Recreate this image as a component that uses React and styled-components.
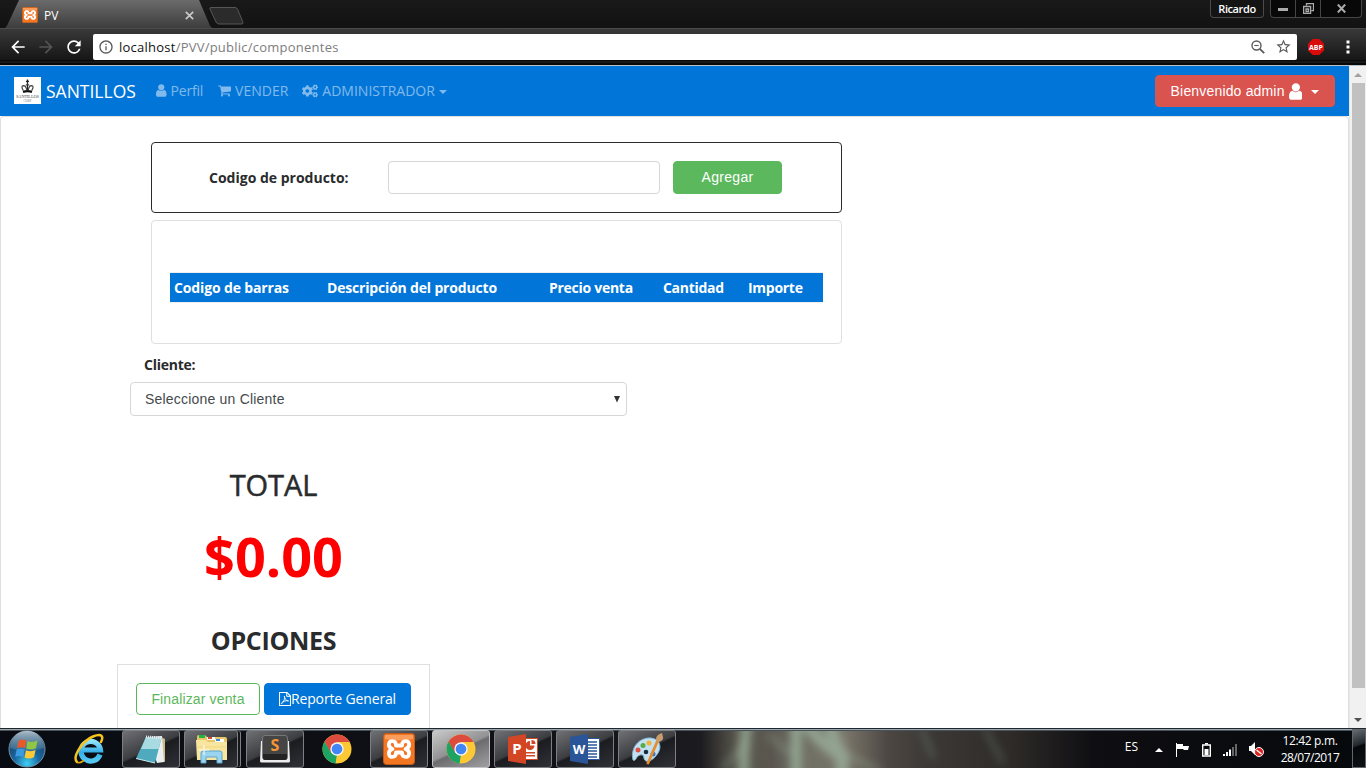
import React from "react";
import styled, { createGlobalStyle, css } from "styled-components";
import { FaCogs } from "react-icons/fa";
import { MdArrowBack, MdArrowForward, MdRefresh, MdInfoOutline, MdStarBorder } from "react-icons/md";

const UI = '"Open Sans", "Noto Sans", sans-serif';
const ARIAL = '"Liberation Sans", Arial, sans-serif';
const BLUE = "#0275d8";

const Global = createGlobalStyle`
  * { box-sizing: border-box; }
  body { margin: 0; background: #fff; overflow: hidden; font-family: ${UI}; color: #292b2c; }
  svg { display: block; flex: none; }
`;

const Label = styled.span`
  display: inline-block;
  white-space: nowrap;
  letter-spacing: ${(p) => p.$ls || 0}px;
`;

const Screen = styled.div`
  width: 1366px;
  height: 768px;
  display: flex;
  flex-direction: column;
  overflow: hidden;
`;

/* ---------- browser window ---------- */
const TitleBar = styled.header`
  height: 28px;
  flex: none;
  display: flex;
  align-items: flex-start;
  justify-content: space-between;
  background: linear-gradient(#191919, #121212);
`;
const TabStrip = styled.div`
  display: flex;
  height: 28px;
  padding-left: 5px;
`;
const Tab = styled.div`
  width: 207px;
  height: 28px;
  display: flex;
  align-items: center;
  padding: 2px 18px 0 17px;
  margin-right: -3px;
  color: #fff;
  font-size: 12px;
  background: linear-gradient(#6b6b6b, #3d3d3d);
  clip-path: polygon(0 100%, 2px 92%, 14px 0, 194px 0, 205px 92%, 100% 100%);
`;
const TabTitle = styled(Label)`
  flex: 1;
  margin-left: 6px;
`;
const WindowControls = styled.div`
  display: flex;
  align-items: flex-start;
  padding-right: 4px;
`;
const UserBadge = styled.div`
  width: 54px;
  height: 18px;
  margin-right: 6px;
  border: 1px solid #4a4a4a;
  border-top: 0;
  border-radius: 0 0 4px 4px;
  background: #141414;
  color: #fff;
  font: 600 11px/17px ${UI};
  text-align: center;
`;
const ControlGroup = styled.div`
  display: flex;
  height: 18px;
  border: 1px solid #454545;
  border-top: 0;
  border-radius: 0 0 4px 4px;
  background: #080808;
`;
const Control = styled.div`
  width: ${(p) => p.$w}px;
  display: flex;
  align-items: center;
  justify-content: center;
  & + & { border-left: 1px solid #454545; }
`;
const Toolbar = styled.div`
  height: 38px;
  flex: none;
  display: flex;
  align-items: center;
  padding: 0 12px 0 8px;
  border-top: 1px solid #4b4b4b;
  border-bottom: 1px solid #b9c2c8;
  background: linear-gradient(#393939 0, #161616 31px, #000 32px, #2a2a2a 33px, #080808 34px);
`;
const NavIcon = styled.div`
  width: 28px;
  margin-bottom: 1px;
  color: ${(p) => (p.$off ? "#545454" : "#fff")};
`;
const AddressBar = styled.div`
  width: 1204px;
  height: 26px;
  margin: 0 0 1px 1px;
  display: flex;
  align-items: center;
  padding: 0 5px;
  background: #fff;
  border-radius: 2px;
  color: #7d7d7d;
  font-size: 13px;
`;
const Url = styled(Label)`
  flex: 1;
  margin-left: 5px;
  b { font-weight: 400; color: #111; }
`;
const StarIcon = styled(MdStarBorder)`
  margin-left: 10px;
`;
const Extension = styled.div`
  margin: 0 22px 0 11px;
`;

const Viewport = styled.div`
  height: 662px;
  flex: none;
  display: flex;
`;
const Page = styled.div`
  width: 1349px;
  height: 662px;
  display: flex;
  flex-direction: column;
  overflow: hidden;
  background: #fff;
`;
const ScrollBar = styled.div`
  width: 17px;
  display: flex;
  flex-direction: column;
  align-items: center;
  background: #f1f1f1;
  padding: 7px 0 6px;
  border-left: 1px solid #e6e6e6;
`;
const Thumb = styled.div`
  width: 13px;
  height: 605px;
  background: #c1c1c1;
  margin: 6px 0 auto;
`;
const Arrow = styled.div`
  border: 4px solid transparent;
  border-top-width: ${(p) => (p.$up ? 0 : 4)}px;
  border-bottom-width: ${(p) => (p.$up ? 4 : 0)}px;
  border-top-color: #505050;
  border-bottom-color: #a3a3a3;
`;

/* ---------- application ---------- */
const NavBar = styled.nav`
  height: 50px;
  flex: none;
  display: flex;
  align-items: center;
  padding: 0 14px;
  background: ${BLUE};
`;
const Brand = styled.div`
  display: flex;
  align-items: center;
  width: 142px;
  height: 50px;
  padding-bottom: 1px;
  color: #fff;
  font-size: 17.5px;
  gap: 5px;
`;
const NavLink = styled.a`
  display: flex;
  align-items: center;
  gap: 4px;
  padding-bottom: 1px;
  margin-right: ${(p) => p.$mr || 0}px;
  color: rgba(255, 255, 255, 0.5);
  font-size: 14px;
`;
const Caret = styled.i`
  border: 4px solid transparent;
  border-top-color: currentColor;
  border-bottom: 0;
  margin-top: 2px;
`;
const Button = styled.button`
  display: flex;
  align-items: center;
  justify-content: center;
  height: ${(p) => p.$h || 32}px;
  width: ${(p) => p.$w}px;
  padding: 0 0 ${(p) => (p.$h ? 2 : 0)}px;
  border: 1px solid ${(p) => p.$color};
  border-radius: 4px;
  background: ${(p) => (p.$outline ? "#fff" : p.$color)};
  color: ${(p) => (p.$outline ? p.$color : "#fff")};
  font: 14px/20px ${(p) => (p.$ui ? UI : ARIAL)};
`;
const UserButton = styled(Button)`
  margin-left: auto;
  gap: 4px;
  svg + i { margin-left: 5px; margin-top: 1px; }
`;
const Body = styled.main`
  width: 1349px;
  flex: 1;
  border: 1px solid #dfdfdf;
  border-bottom: 0;
  border-radius: 4px 4px 0 0;
  padding: 25px 0 0 116px;
`;
const Card = styled.section`
  width: 691px;
  height: ${(p) => p.$h}px;
  margin: 0 0 7px 34px;
  border: 1px solid ${(p) => (p.$dark ? "#292b2c" : "#dfdfdf")};
  border-radius: 4px;
`;
const SearchCard = styled(Card)`
  display: flex;
  align-items: center;
  padding-left: 57px;
`;
const FieldLabel = styled.label`
  display: block;
  width: 179px;
  font-weight: 700;
  font-size: 14px;
  line-height: 20px;
`;
const Input = styled.input`
  width: 272px;
  height: 33px;
  margin: 0 13px 0 0;
  border: 1px solid #d6d6d6;
  border-radius: 4px;
  outline: 0;
`;
const TableCard = styled(Card)`
  padding: 51px 18px 0;
`;
const HeadRow = styled.div`
  display: grid;
  grid-template-columns: 153px 222px 114px 85px 79px;
  height: 31px;
  border-top: 1px solid #eceeef;
  border-bottom: 1px solid #eceeef;
  background: ${BLUE};
  background-clip: padding-box;
  color: #fff;
  font-weight: 700;
  font-size: 14px;
  line-height: 30px;
`;
const HeadCell = styled.div`
  padding-left: 4px;
`;
const ClientBlock = styled.section`
  padding: 4px 0 0 13px;
  ${FieldLabel} { margin: 0 0 7px 14px; line-height: 20px; }
`;
const Select = styled.div`
  width: 497px;
  height: 34px;
  display: flex;
  align-items: center;
  justify-content: space-between;
  padding: 0 6px 0 14px;
  border: 1px solid #d6d6d6;
  border-radius: 4px;
  color: #464a4c;
  font: 14px/20px ${ARIAL};
`;
const Summary = styled.section`
  width: 313px;
  display: flex;
  flex-direction: column;
  align-items: center;
  text-align: center;
`;
const TotalTitle = styled.h2`
  margin: 49px 0 0;
  font-size: 29px;
  line-height: 40px;
  font-weight: 500;
  -webkit-text-stroke: 0.5px #292b2c;
`;
const Amount = styled.div`
  margin-top: 16px;
  color: #f00;
  font-weight: 700;
  font-size: 54px;
  line-height: 70px;
`;
const OptionsTitle = styled.h3`
  margin: 34px 0 0;
  font-size: 25px;
  line-height: 30px;
  font-weight: 700;
`;
const Options = styled.div`
  align-self: stretch;
  margin-top: 9px;
  height: 90px;
  display: flex;
  align-items: flex-start;
  gap: 4px;
  padding: 18px;
  border: 1px solid #dfdfdf;
`;

/* ---------- task bar ---------- */
const TaskBar = styled.footer`
  position: relative;
  height: 40px;
  flex: none;
  display: flex;
  justify-content: space-between;
  border-top: 1px solid #20262e;
  background: #0a0b10;
`;
const Wallpaper = styled.svg`
  position: absolute;
  inset: 0;
`;
const TaskGroup = styled.div`
  position: relative;
  display: flex;
  align-items: center;
  padding-left: ${(p) => p.$pl || 0}px;
`;
const Task = styled.div`
  width: 58px;
  height: 38px;
  margin-right: 4px;
  display: flex;
  align-items: center;
  justify-content: center;
  ${(p) =>
    !p.$plain &&
    css`
      border: 1px solid ${p.$active ? "#c4c4c6" : "#7c7f84"};
      border-radius: 3px;
      background: ${p.$active
        ? "linear-gradient(155deg, #c9c9ca 0, #929294 48%, #6c6c70 52%, #a0a0a2 100%)"
        : "linear-gradient(155deg, #707175 0, #3c3d41 48%, #1b1c20 52%, #303136 100%)"};
    `}
`;
const FirstTask = styled(Task)`
  margin-left: 14px;
`;
const StackedTask = styled(Task)`
  width: 54px;
  margin-right: 8px;
  box-shadow: 3px 0 0 -1px #15161a, 4px 0 0 -1px #7c7f84;
`;
const Tray = styled(TaskGroup)`
  color: #fff;
  font-size: 12px;
`;
const TrayLang = styled(Label)`
  margin: -5px 17px 0 0;
  font-size: 12px;
`;
const TrayIcons = styled.div`
  display: flex;
  align-items: center;
  gap: 12px;
  margin: 2px 4px 0 0;
`;
const Clock = styled.div`
  width: 84px;
  display: flex;
  flex-direction: column;
  align-items: center;
  line-height: 17px;
`;
const ShowDesktop = styled.div`
  width: 14px;
  height: 39px;
  border: 1px solid #60666b;
  background: linear-gradient(160deg, #646a6f 0, #24292d 40%, #05080a 45%, #0d1114 100%);
`;

/* ---------- drawings ---------- */
const UserIcon = ({ s = 14 }) => (
  <svg width={s * 0.81} height={s} viewBox="256 128 1280 1536" fill="currentColor">
    <path d="M1536 1399q0 109-62.5 187t-150.5 78h-854q-88 0-150.5-78t-62.5-187q0-85 8.5-160.5t31.5-152 58.5-131 94-89 134.5-34.5q131 128 313 128t313-128q76 0 134.5 34.5t94 89 58.5 131 31.5 152 8.5 160.5zm-256-887q0 159-112.5 271.5t-271.5 112.5-271.5-112.5-112.5-271.5 112.5-271.5 271.5-112.5 271.5 112.5 112.5 271.5z" />
  </svg>
);
const CartIcon = () => (
  <svg width="13" height="12" viewBox="64 192 1664 1536" fill="currentColor">
    <path d="M704 1536q0 52-38 90t-90 38-90-38-38-90 38-90 90-38 90 38 38 90zm896 0q0 52-38 90t-90 38-90-38-38-90 38-90 90-38 90 38 38 90zm128-1088v512q0 24-16.5 42.5t-40.5 21.5l-1044 122q13 60 13 70 0 16-24 64h920q26 0 45 19t19 45-19 45-45 19h-1024q-26 0-45-19t-19-45q0-11 8-31.5t16-36 21.5-40 15.5-29.5l-177-823h-204q-26 0-45-19t-19-45 19-45 45-19h256q16 0 28.5 6.5t19.5 15.5 13 24.5 8 26 5.5 29.5 4.5 26h1201q26 0 45 19t19 45z" />
  </svg>
);
const PdfIcon = () => (
  <svg width="12" height="14" viewBox="0 0 12 14" fill="none" stroke="#fff">
    <path d="M.5.500h7.500l3.500 3.500v9.500H.5z" strokeWidth="1.100" />
    <path d="M7.700.800v3.500h3.500" />
    <path d="M5.300 4c.3 2.500 1.500 4.500 4.200 4.900c-2.500-.5-5 .3-6 1.100c-1 .8-1.300 1.500-1 1.700c.5.300 2.200-2 2.800-4.200c.4-1.300.4-3 0-3.500z" strokeWidth=".9" />
  </svg>
);
const XamppIcon = ({ s }) => (
  <svg width={s} height={s} viewBox="0 0 32 32">
    <rect x="0.5" y="0.5" width="31" height="31" rx="3" fill="#f37623" stroke="#c65a14" />
    <path d="M2 2h28v4q-14 3-28 0z" fill="#fba66a" opacity=".8" />
    <path d="M11 8.500C5 6.500 4 14 9.500 16C4 18 5 25.500 11 23.500C12.500 23 13 21 13 19.500H19C19 21 19.500 23 21 23.500C27 25.500 28 18 22.500 16C28 14 27 6.500 21 8.500C19.500 9 19 11 19 12.500H13C13 11 12.500 9 11 8.500Z" fill="none" stroke="#fff" strokeWidth="3.800" strokeLinejoin="round" />
  </svg>
);
const ChromeIcon = () => (
  <svg width="30" height="30" viewBox="0 0 30 30">
    <circle cx="15" cy="15" r="14.500" fill="#fcc934" />
    <path d="M15 15L8.500 18.500L2.500 7.600A14.500 14.500 0 0 1 27.600 8H15z" fill="#dd4b3e" />
    <path d="M2.500 7.600L9 18.500L15 21.500L13.500 29.400A14.500 14.500 0 0 1 2.500 7.600z" fill="#1da362" />
    <path d="M15 21.500L20.500 18L14 29.500z" fill="#fcc934" />
    <circle cx="15" cy="15" r="6.700" fill="#f4f4f4" />
    <circle cx="15" cy="15" r="5.300" fill="#4285f4" />
  </svg>
);
const LogoIcon = () => (
  <svg width="27" height="27" viewBox="0 0 27 27">
    <path fill="#fff" d="M0 0h27v27H0z" />
    <path d="M13.500 2.500v11M12 4.300h3" stroke="#222" strokeWidth="1.300" />
    <path d="M9.300 13.500Q6.500 9 9.500 8.700Q12 8.700 12.700 13M17.700 13.500Q20.500 9 17.500 8.700Q15 8.700 14.300 13M11.800 8.500Q13.500 6 15.200 8.500" fill="none" stroke="#444" strokeWidth="1.200" />
    <path d="M9 14.800q4.500-1.500 9 0" fill="none" stroke="#111" strokeWidth="2.300" />
    <text x="13.500" y="21.300" fontSize="4.400" textAnchor="middle" textLength="23" fontFamily="Liberation Serif, serif" fill="#444">SANTILLOS</text>
    <text x="13.500" y="25" fontSize="3" textAnchor="middle" fontFamily="Liberation Serif, serif" fill="#777">CORP</text>
  </svg>
);
const StartOrb = () => (
  <svg width="38" height="38" viewBox="0 0 38 38">
    <defs>
      <radialGradient id="orb" cx=".5" cy=".9" r=".9">
        <stop offset="0" stopColor="#3fd0f4" />
        <stop offset=".4" stopColor="#17669f" />
        <stop offset="1" stopColor="#1d3a57" />
      </radialGradient>
      <linearGradient id="orbShine" x2="0" y2="1">
        <stop offset="0" stopColor="#dce6ec" stopOpacity=".75" />
        <stop offset="1" stopColor="#7fa3b8" stopOpacity=".25" />
      </linearGradient>
    </defs>
    <circle cx="19" cy="19" r="18" fill="url(#orb)" stroke="#7592a4" />
    <path d="M2 18A17 17 0 0 1 36 18Q19 24 2 18z" fill="url(#orbShine)" />
    <path d="M10.500 11Q14.500 8.500 18.300 10.500L17 18Q13 16.300 9 18.200z" fill="#e8592b" />
    <path d="M19.500 11Q24 13 29.500 10.500L28 18.200Q23 20.500 18.200 18.500z" fill="#8fc643" />
    <path d="M8.600 19.600Q12.500 17.800 16.600 19.700L15.200 27Q11 25.200 7.200 27z" fill="#3b9be0" />
    <path d="M17.900 20.200Q22.500 22.200 27.600 20L26 27.200Q21 29.700 16.600 27.500z" fill="#fdc934" />
  </svg>
);
const ExplorerE = () => (
  <svg width="32" height="32" viewBox="0 0 32 32">
    <defs>
      <linearGradient id="ieBlue" x2="0" y2="1">
        <stop offset="0" stopColor="#8fe2fb" />
        <stop offset=".55" stopColor="#35aee8" />
        <stop offset="1" stopColor="#55c9f3" />
      </linearGradient>
    </defs>
    <path d="M27 21.500A9.800 9.800 0 1 1 27.500 17H10" fill="none" stroke="url(#ieBlue)" strokeWidth="5.200" />
    <path d="M4 29C-1 24 9 8 20 3.500C28.500 0 31 3 28 9" fill="none" stroke="#f6c21c" strokeWidth="2.500" strokeLinecap="round" />
    <path d="M4 29Q6 31 11 27.500" fill="none" stroke="#e9a90e" strokeWidth="1.600" />
  </svg>
);
const NotepadIcon = () => (
  <svg width="32" height="30" viewBox="0 0 32 30">
    <path d="M26 3l4 2v23l-4-1z" fill="#c9ba8a" />
    <path d="M12 3L27 2L29 28L22 29z" fill="#e9eef0" />
    <path d="M11 3L26.500 4L20 29L1 24.500z" fill="#4eaabc" />
    <path d="M11 3L26.500 4L23.500 15L6 15z" fill="#a8dbe2" />
    <path d="M11 3L27 4" stroke="#e8e8e8" strokeWidth="3" strokeDasharray="1 1" />
    <path d="M1 24.500L20 29" stroke="#c9edf0" />
  </svg>
);
const FolderIcon = () => (
  <svg width="33" height="31" viewBox="0 0 33 31">
    <path d="M2 4q0-2 2-2h6l2 2h18q2 0 2 2v20H2z" fill="#e8c765" />
    <path d="M4 2h6v3H4z" fill="#26b24b" />
    <path d="M12 4h8v3h-8z" fill="#fff" />
    <path d="M13 4h4v2h-4z" fill="#d94a35" />
    <path d="M20 6h9v3h-9z" fill="#fff" />
    <path d="M21 6h4v2h-4z" fill="#3f88d8" />
    <path d="M1 7h10l2 2h19v18H2z" fill="#f8e6a0" />
    <path d="M3 14h28" stroke="#f2d57a" />
    <path d="M6 30V20q0-2 2-2h17q2 0 2 2v10h-5v-6H11v6z" fill="#9bd4ee" stroke="#5aa6cf" />
    <path d="M9 12v10M4 17h10" stroke="#fff" strokeWidth="1.200" opacity=".8" />
  </svg>
);
const SublimeIcon = () => (
  <svg width="32" height="30" viewBox="0 0 32 30">
    <path d="M2 7h28l1 20q0 1.500-1.500 1.500h-27Q1 28.500 1 27z" fill="#ececec" />
    <rect x="3.500" y="1.500" width="25" height="24" rx="2.500" fill="#454545" stroke="#777" />
    <path d="M4 20h24v4q0 2-2 2H6q-2 0-2-2z" fill="#232323" />
    <text x="16" y="16.500" fontSize="16" fontWeight="700" textAnchor="middle" fontFamily="Open Sans, sans-serif" fill="#f79733">S</text>
  </svg>
);
const OfficeIcon = ({ letter, color }) => (
  <svg width="31" height="30" viewBox="0 0 31 30">
    <path d="M16 4.500h13.500v21H16z" fill="#fff" stroke={color} />
    {letter === "W" ? (
      <path d="M17 8h10M17 11h10M17 14h10M17 17h10M17 20h10M17 23h10" stroke={color} strokeWidth="1.300" />
    ) : (
      <g fill={color}>
        <path d="M22 7a4.500 4.500 0 1 0 4.500 4.500H22z" />
        <path d="M23.500 6v4h4a4 4 0 0 0-4-4zM18 18h9v1.500h-9zM18 21h9v1.500h-9z" />
      </g>
    )}
    <path d="M0 3L18 0V30L0 27z" fill={color} />
    <text x="9" y="20" fontSize={letter === "W" ? 13 : 15} fontWeight="700" textAnchor="middle" fontFamily="Open Sans, sans-serif" fill="#fff">{letter}</text>
  </svg>
);
const PaintIcon = () => (
  <svg width="33" height="32" viewBox="0 0 33 32">
    <path d="M2 27C-1 15 8 4 20 5C29 6 31 14 27 20C23 27 17 29 15 28C11 26 15 21 9 22C5 23 5 29 2 27z" fill="#c4e1f1" stroke="#82b3d0" />
    <circle cx="7" cy="17" r="2.500" fill="#d95346" />
    <circle cx="12" cy="12.500" r="2.500" fill="#57ab49" />
    <circle cx="18" cy="10" r="2.500" fill="#f0b43a" />
    <circle cx="15" cy="19" r="2.300" fill="#1a2c42" />
    <circle cx="22" cy="21" r="2.500" fill="#3c73c5" />
    <path d="M27 7L17 30" stroke="#e58e2d" strokeWidth="2.800" strokeLinecap="round" />
    <path d="M25 8Q24 2 31 0L32 4Q33 7 28 9z" fill="#c79d6d" />
  </svg>
);

const Aurora = () => (
  <Wallpaper width="1366" height="39" viewBox="0 0 1366 39">
    <defs>
      <linearGradient id="base">
        <stop offset="0" stopColor="#080c12" />
        <stop offset=".4" stopColor="#111116" />
        <stop offset=".513" stopColor="#1c1b1f" />
        <stop offset=".54" stopColor="#5a584e" />
        <stop offset=".565" stopColor="#5a564f" />
        <stop offset=".585" stopColor="#6f6f64" />
        <stop offset=".62" stopColor="#787469" />
        <stop offset=".65" stopColor="#4c4742" />
        <stop offset=".68" stopColor="#3b3835" />
        <stop offset=".74" stopColor="#2e2b28" />
        <stop offset=".8" stopColor="#0f0e12" />
        <stop offset="1" stopColor="#05090c" />
      </linearGradient>
      <filter id="soft" filterUnits="userSpaceOnUse" x="680" y="-20" width="400" height="80"><feGaussianBlur stdDeviation="4.500" /></filter>
    </defs>
    <path fill="url(#base)" d="M0 0h1366v39H0z" />
    <g filter="url(#soft)" fill="none" stroke="#a0b8a2">
      <path d="M748-10Q743 15 744 50M796-10V50" strokeWidth="10" opacity=".75" />
      <path d="M803-10Q820 15 842 28V50M828-10Q835 12 842 28" strokeWidth="12" opacity=".7" />
      <path d="M842 24L880 42M748 12L722 40M768 5L790 25" strokeWidth="6" opacity=".3" />
      <path d="M922 0L934 30M985 0L1003 34" strokeWidth="5" opacity=".25" />
    </g>
    <path d="M0 .5h1366" stroke="#9da7ae" />
    <path d="M0 1.500h1366" stroke="#47525a" />
  </Wallpaper>
);

const columns = [
  ["Codigo de barras", -0.14],
  ["Descripción del producto", -0.18],
  ["Precio venta", -0.28],
  ["Cantidad", -0.3],
  ["Importe", -0.28],
];

export default function App() {
  return (
    <Screen>
      <Global />
      <TitleBar>
        <TabStrip>
          <Tab>
            <XamppIcon s={16} />
            <TabTitle>PV</TabTitle>
            <svg width="9" height="9" viewBox="0 0 9 9" stroke="#c9c9c9" strokeWidth="1.700"><path d="M.8.800l7.400 7.400M8.200.800L.8 8.200" /></svg>
          </Tab>
          <svg width="36" height="28" viewBox="0 0 36 28">
            <path d="M2 7.500H26q2 0 2.700 2l5 12q1 2.500-1 2.500H10q-2 0-3-2L1 9q-.5-1.500 1-1.500z" fill="#2b2b2b" stroke="#565656" />
          </svg>
        </TabStrip>
        <WindowControls>
          <UserBadge><Label $ls={-0.4}>Ricardo</Label></UserBadge>
          <ControlGroup>
            <Control $w={24}><svg width="10" height="4"><path d="M0 1h10v3H0z" fill="#ababab" /></svg></Control>
            <Control $w={25}>
              <svg width="11" height="11" viewBox="0 0 11 11" fill="none" stroke="#ababab" strokeWidth="1.300"><path d="M3.500 2.500V.6h7v7H8.500M.6 3.500h7v7h-7zM3 6h2.500v2.500H3z" /></svg>
            </Control>
            <Control $w={41}>
              <svg width="9" height="9" viewBox="0 0 9 9" stroke="#ababab" strokeWidth="2"><path d="M.8.500l7.400 8M8.200.500l-7.400 8" /></svg>
            </Control>
          </ControlGroup>
        </WindowControls>
      </TitleBar>
      <Toolbar>
        <NavIcon><MdArrowBack size={20} /></NavIcon>
        <NavIcon $off><MdArrowForward size={20} /></NavIcon>
        <NavIcon><MdRefresh size={20} /></NavIcon>
        <AddressBar>
          <MdInfoOutline size={16} color="#5a5a5a" />
          <Url $ls={0.24}><b>localhost</b>/PVV/public/componentes</Url>
          <svg width="14" height="14" viewBox="0 0 14 14" fill="none" stroke="#5a5a5a" strokeWidth="1.400"><circle cx="5.500" cy="5.500" r="4.500" /><path d="M3.300 5.500h4.400" strokeWidth="1.100" /><path d="M8.800 8.800l4.400 4.400" strokeWidth="1.800" /></svg>
          <StarIcon size={17} color="#5a5a5a" />
        </AddressBar>
        <Extension>
          <svg width="16" height="16" viewBox="0 0 16 16"><path d="M4.700 0h6.600L16 4.700v6.600L11.300 16H4.700L0 11.300V4.700z" fill="#d80a0a" /><text x="8" y="10.700" fontSize="7" fontWeight="700" textAnchor="middle" textLength="14" fontFamily="Open Sans, sans-serif" fill="#fff">ABP</text></svg>
        </Extension>
        <svg width="4" height="14" fill="#fff"><path d="M.5.500h3v3h-3zM.5 5.500h3v3h-3zM.5 10.500h3v3h-3z" /></svg>
      </Toolbar>

      <Viewport>
        <Page>
          <NavBar>
            <Brand><LogoIcon /><Label>SANTILLOS</Label></Brand>
            <NavLink $mr={15}><UserIcon s={13} /><Label $ls={-0.2}>Perfil</Label></NavLink>
            <NavLink $mr={14}><CartIcon /><Label>VENDER</Label></NavLink>
            <NavLink><FaCogs size={16} /><Label>ADMINISTRADOR</Label><Caret /></NavLink>
            <UserButton $w={180} $color="#d9534f"><Label $ls={0.17}>Bienvenido admin</Label><UserIcon s={17} /><Caret /></UserButton>
          </NavBar>
          <Body>
            <SearchCard $dark $h={71}>
              <FieldLabel>Codigo de producto:</FieldLabel>
              <Input />
              <Button $w={109} $h={33} $color="#5cb85c"><Label $ls={0.3}>Agregar</Label></Button>
            </SearchCard>
            <TableCard $h={124}>
              <HeadRow>
                {columns.map(([name, ls]) => (
                  <HeadCell key={name}><Label $ls={ls}>{name}</Label></HeadCell>
                ))}
              </HeadRow>
            </TableCard>
            <ClientBlock>
              <FieldLabel><Label $ls={-0.25}>Cliente:</Label></FieldLabel>
              <Select><Label $ls={0.2}>Seleccione un Cliente</Label><svg width="6" height="7"><path d="M0 0h6L3 6.500z" fill="#333" /></svg></Select>
            </ClientBlock>
            <Summary>
              <TotalTitle><Label $ls={-0.1}>TOTAL</Label></TotalTitle>
              <Amount>$0.00</Amount>
              <OptionsTitle><Label $ls={-0.3}>OPCIONES</Label></OptionsTitle>
              <Options>
                <Button $w={124} $outline $color="#5cb85c"><Label $ls={0.14}>Finalizar venta</Label></Button>
                <Button $w={147} $ui $color={BLUE}><PdfIcon /><Label $ls={-0.15}>Reporte General</Label></Button>
              </Options>
            </Summary>
          </Body>
        </Page>
        <ScrollBar><Arrow $up /><Thumb /><Arrow /></ScrollBar>
      </Viewport>

      <TaskBar>
        <Aurora />
        <TaskGroup $pl={8}>
          <StartOrb />
          <FirstTask $plain><ExplorerE /></FirstTask>
          <Task><NotepadIcon /></Task>
          <StackedTask><FolderIcon /></StackedTask>
          <Task><SublimeIcon /></Task>
          <Task $plain><ChromeIcon /></Task>
          <Task><XamppIcon s={32} /></Task>
          <Task $active><ChromeIcon /></Task>
          <Task><OfficeIcon letter="P" color="#d24625" /></Task>
          <Task><OfficeIcon letter="W" color="#2a5699" /></Task>
          <Task><PaintIcon /></Task>
        </TaskGroup>
        <Tray>
          <TrayLang>ES</TrayLang>
          <TrayIcons>
            <svg width="8" height="4"><path d="M4 0l4 4H0z" fill="#fff" /></svg>
            <svg width="15" height="14" fill="#fff"><path d="M1 0h1v14H1zM2 1h6v2h6l-1 4H9l-1-1H2z" /></svg>
            <svg width="9" height="14"><path d="M3 0h3v1.500H3z" fill="#fff" /><path d="M.7 2h7.600v11H.7z" fill="none" stroke="#fff" strokeWidth="1.400" /><path d="M2.500 6h4v6h-4z" fill="#fff" /></svg>
            <svg width="14" height="12"><path d="M0 10h2v2H0zM3 8h2v4H3zM6 5.500h2V12H6z" fill="#fff" /><path d="M9 3h2v9H9zM12 0h2v12h-2z" fill="#666" /></svg>
            <svg width="15" height="15"><path d="M0 4h2l4-4v13L2 9H0z" fill="#fff" /><circle cx="10" cy="10" r="4.500" fill="#d22" stroke="#fff" /><path d="M7.500 8l5 4" stroke="#fff" strokeWidth="1.500" /></svg>
          </TrayIcons>
          <Clock><Label $ls={-0.35}>12:42 p.m.</Label><Label $ls={-0.5}>28/07/2017</Label></Clock>
          <ShowDesktop />
        </Tray>
      </TaskBar>
    </Screen>
  );
}
